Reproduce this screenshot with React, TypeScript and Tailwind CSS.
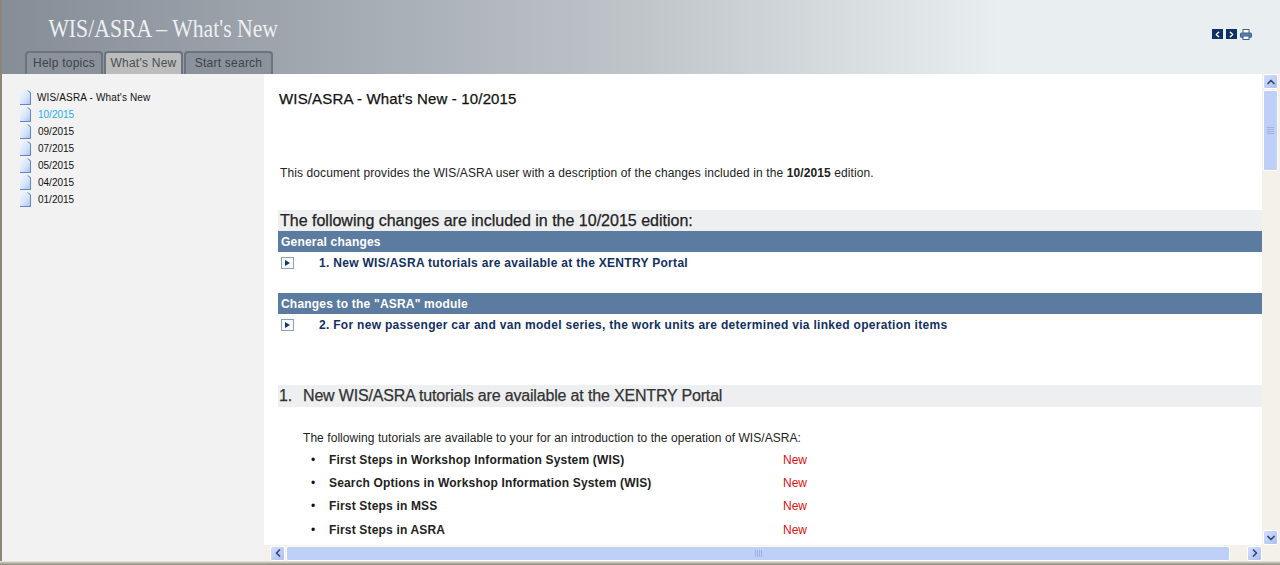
import { ChevronDown, ChevronLeft, ChevronRight, ChevronUp } from 'lucide-react';

const editions = ['10/2015', '09/2015', '07/2015', '05/2015', '04/2015', '01/2015'];

const tutorials = [
  'First Steps in Workshop Information System (WIS)',
  'Search Options in Workshop Information System (WIS)',
  'First Steps in MSS',
  'First Steps in ASRA',
];

function DocIcon() {
  return (
    <svg width="11" height="15" viewBox="0 0 11 15" className="shrink-0">
      <defs>
        <linearGradient id="doc" x1="0" y1="0" x2="1" y2="1">
          <stop offset="0" stopColor="#f4f8ff" />
          <stop offset="0.55" stopColor="#d6e4fa" />
          <stop offset="1" stopColor="#9fbeee" />
        </linearGradient>
      </defs>
      <path d="M0 0H8L11 3V15H0Z" fill="url(#doc)" />
      <path d="M0 14.5H10.5V3" fill="none" stroke="#5f86c8" strokeWidth="1" />
      <path d="M8 0.5L10.5 3" fill="none" stroke="#3f69b5" strokeWidth="1" />
    </svg>
  );
}

function Tab({ label, active, width }: { label: string; active?: boolean; width: string }) {
  return (
    <div
      className={`${width} h-[23px] pb-[2px] rounded-t-[4px] border-2 border-b-0 border-[#6b737c] flex items-center justify-center text-[12px] tracking-[0.02em] ${
        active ? 'bg-[#bcbcbc] text-[#4a4f55]' : 'bg-[#8b929b] text-[#3d4349]'
      }`}
    >
      {label}
    </div>
  );
}

function ScrollButton({ children }: { children: React.ReactNode }) {
  return (
    <div className="w-[15px] h-[15px] rounded-[2px] border border-white bg-gradient-to-br from-[#d3dffb] to-[#aebff0] flex items-center justify-center text-[#2f4a7c] shrink-0">
      {children}
    </div>
  );
}

function ExpandRow({ text }: { text: string }) {
  return (
    <div className="h-[21px] flex items-center pl-[3px]">
      <div className="w-[13px] h-[12px] border border-[#8da0b8] flex items-center justify-center bg-[#f7f9fb]">
        <div className="w-0 h-0 border-y-[3.5px] border-y-transparent border-l-[5px] border-l-[#16356b]" />
      </div>
      <span className="ml-[25px] text-[12px] font-bold text-[#12305f] tracking-[0.3px]">{text}</span>
    </div>
  );
}

function SectionBar({ text }: { text: string }) {
  return (
    <div className="h-[21px] bg-[#5b7ba1] flex items-center px-[3px] text-[12px] font-bold text-white tracking-[0.2px]">
      {text}
    </div>
  );
}

export default function App() {
  return (
    <div className="w-[1280px] h-[565px] overflow-hidden flex flex-col bg-[#ecebe0] font-['Liberation_Sans',Arial,sans-serif]">
      {/* HEADER */}
      <header className="h-[74px] shrink-0 border-l-2 border-[#8a8776] bg-gradient-to-r from-[#858d97] from-0% via-[#c0c5ca] via-50% to-[#e9eef0] to-78% flex justify-between">
        <div className="flex flex-col pl-[23px]">
          <h1 className="h-[51px] pt-[14px] pl-[28px] text-[26px] leading-[30px] text-[#eef0f2] font-['Liberation_Serif',serif] whitespace-nowrap scale-x-[0.835] origin-left">
            WIS/ASRA – What's New
          </h1>
          <div className="flex gap-px">
            <Tab label="Help topics" width="w-[78px]" />
            <Tab label="What's New" active width="w-[79px]" />
            <Tab label="Start search" width="w-[89px]" />
          </div>
        </div>
        <div className="flex items-start gap-[3px] pt-[29px] pr-[28px]">
          <div className="w-[11px] h-[10px] bg-[#0f2f66] flex items-center justify-center text-white">
            <ChevronLeft size={9} strokeWidth={4} />
          </div>
          <div className="w-[11px] h-[10px] bg-[#0f2f66] flex items-center justify-center text-white">
            <ChevronRight size={9} strokeWidth={4} />
          </div>
          <svg width="12" height="11" viewBox="0 0 12 11">
            <rect x="3" y="0.5" width="6" height="4" fill="#fff" stroke="#3a5f8d" />
            <rect x="0.5" y="4" width="11" height="4.5" rx="1" fill="#5c7fa8" stroke="#3a5f8d" />
            <rect x="3" y="7" width="6" height="3.5" fill="#fff" stroke="#3a5f8d" />
          </svg>
        </div>
      </header>

      <div className="flex-1 min-h-0 flex">
        {/* SIDEBAR */}
        <nav className="w-[264px] shrink-0 border-l-2 border-[#8a8776] bg-[#f2f2f2] pt-[15px] pl-[18px] text-[10px] text-[#111]">
          <div className="h-[17px] flex items-center gap-[6px]">
            <DocIcon />
            <span className="tracking-[0.15px]">WIS/ASRA - What's New</span>
          </div>
          {editions.map((e, i) => (
            <div key={e} className={`h-[17px] flex items-center gap-[7px] ${i === 0 ? 'text-[#1eb0f0]' : ''}`}>
              <DocIcon />
              <span>{e}</span>
            </div>
          ))}
        </nav>

        {/* MAIN + SCROLLBARS */}
        <div className="flex-1 min-w-0 flex flex-col">
          <div className="flex-1 min-h-0 flex">
            <main className="flex-1 min-w-0 bg-white overflow-hidden">
              <h2 className="pt-[16px] pl-[15px] text-[15px] leading-[18px] tracking-[0.15px] text-[#111] [-webkit-text-stroke:0.25px_#111]">
                WIS/ASRA - What's New - 10/2015
              </h2>
              <p className="mt-[57px] pl-[16px] text-[12px] leading-[16px] text-[#222] tracking-[0.1px]">
                This document provides the WIS/ASRA user with a description of the changes included in the <b>10/2015</b> edition.
              </p>
              <div className="mt-[29px] ml-[14px] h-[21px] bg-[#eeeff1] flex items-center pl-[2px] text-[16px] text-[#222] [-webkit-text-stroke:0.25px_#222]">
                The following changes are included in the 10/2015 edition:
              </div>
              <div className="ml-[14px]">
                <SectionBar text="General changes" />
                <ExpandRow text="1. New WIS/ASRA tutorials are available at the XENTRY Portal" />
                <div className="h-[20px]" />
                <SectionBar text={'Changes to the "ASRA" module'} />
                <ExpandRow text="2. For new passenger car and van model series, the work units are determined via linked operation items" />
              </div>
              <div className="mt-[50px] ml-[14px] h-[22px] bg-[#eeeff1] flex items-center pl-[1px] text-[16px] tracking-[-0.17px] text-[#333] [-webkit-text-stroke:0.25px_#333]">
                <span className="w-[24px]">1.</span>
                <span>New WIS/ASRA tutorials are available at the XENTRY Portal</span>
              </div>
              <p className="mt-[23px] pl-[39px] text-[12px] leading-[16px] text-[#222] tracking-[0.06px]">
                The following tutorials are available to your for an introduction to the operation of WIS/ASRA:
              </p>
              <ul className="mt-[2px]">
                {tutorials.map((t) => (
                  <li key={t} className="h-[23.4px] flex items-center text-[12px]">
                    <span className="w-[65px] pl-[47px] text-[#111]">•</span>
                    <span className="w-[454px] font-bold text-[#222] tracking-[0.17px]">{t}</span>
                    <span className="text-[#e01010]">New</span>
                  </li>
                ))}
              </ul>
            </main>
            {/* vertical scrollbar */}
            <div className="w-[18px] shrink-0 bg-[#f3f1e9] flex flex-col items-center pl-px pr-[2px]">
              <ScrollButton>
                <ChevronUp size={12} strokeWidth={3.5} />
              </ScrollButton>
              <div className="w-[15px] h-[81px] mt-px rounded-[2px] border border-white bg-[#bfd0f8] flex flex-col items-center justify-center gap-px">
                <div className="w-[7px] h-px bg-[#9cb2e4]" />
                <div className="w-[7px] h-px bg-[#9cb2e4]" />
                <div className="w-[7px] h-px bg-[#9cb2e4]" />
                <div className="w-[7px] h-px bg-[#9cb2e4]" />
              </div>
              <div className="flex-1" />
              <ScrollButton>
                <ChevronDown size={12} strokeWidth={3.5} />
              </ScrollButton>
            </div>
          </div>
          {/* horizontal scrollbar */}
          <div className="h-[16px] shrink-0 bg-[#f3f1e9] flex items-center pr-[18px] pl-[6px]">
            <ScrollButton>
              <ChevronLeft size={12} strokeWidth={3.5} />
            </ScrollButton>
            <div className="w-[944px] h-[15px] ml-px rounded-[2px] border border-white bg-[#bfd0f8] flex items-center justify-center gap-px">
              <div className="w-px h-[7px] bg-[#9cb2e4]" />
              <div className="w-px h-[7px] bg-[#9cb2e4]" />
              <div className="w-px h-[7px] bg-[#9cb2e4]" />
              <div className="w-px h-[7px] bg-[#9cb2e4]" />
            </div>
            <div className="flex-1" />
            <ScrollButton>
              <ChevronRight size={12} strokeWidth={3.5} />
            </ScrollButton>
          </div>
        </div>
      </div>
      {/* bottom frame */}
      <div className="h-[4px] shrink-0 bg-gradient-to-b from-[#ecebe0] to-[#8a8776]" />
    </div>
  );
}
